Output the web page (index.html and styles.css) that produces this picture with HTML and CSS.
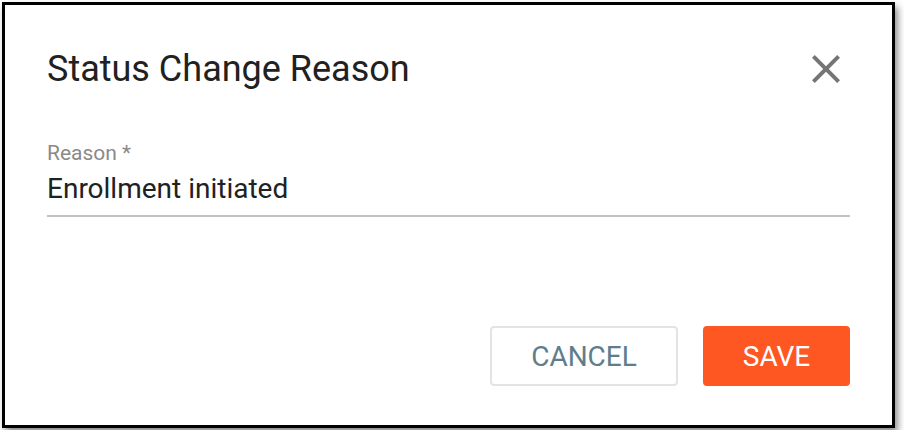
FILE: index.html
```html
<!DOCTYPE html>
<html>
<head>
<meta charset="utf-8">
<link rel="stylesheet" href="styles.css">
</head>
<body>
<div class="dialog">
  <div class="header">
    <h1 class="title">Status Change Reason</h1>
    <button class="close" aria-label="Close">
      <svg viewBox="0 0 24 24" width="48" height="48"><path fill="#757575" d="M19 6.41L17.59 5 12 10.59 6.41 5 5 6.41 10.59 12 5 17.59 6.41 19 12 13.41 17.59 19 19 17.59 13.41 12z"/></svg>
    </button>
  </div>
  <div class="field">
    <label class="label">Reason *</label>
    <div class="value">Enrollment initiated</div>
  </div>
  <div class="actions">
    <button class="btn btn-cancel">CANCEL</button>
    <button class="btn btn-save">SAVE</button>
  </div>
</div>
</body>
</html>
```
FILE: styles.css
```css
html, body {
  margin: 0;
  padding: 0;
  background: #ffffff;
}
body {
  font-family: Roboto, "Liberation Sans", sans-serif;
  padding: 2px;
}
.dialog {
  box-sizing: border-box;
  width: 893px;
  height: 426px;
  border: 3px solid #000;
  background: #fff;
  box-shadow: 3px 5px 7px rgba(0, 0, 0, 0.45);
  padding: 40px 42px 0 42px;
  display: flex;
  flex-direction: column;
}
.header {
  display: flex;
  align-items: center;
  justify-content: space-between;
  height: 48px;
}
.title {
  margin: 0;
  font-size: 36px;
  line-height: 42px;
  font-weight: 400;
  color: #212121;
}
.close {
  border: 0;
  background: none;
  padding: 0;
  width: 48px;
  height: 48px;
  display: flex;
}
.field {
  margin-top: 48px;
  display: flex;
  flex-direction: column;
  border-bottom: 2px solid #c2c2c2;
  padding-bottom: 10px;
}
.label {
  font-size: 21px;
  line-height: 24px;
  color: #8a8a8a;
}
.value {
  margin-top: 8px;
  font-size: 28px;
  line-height: 32px;
  color: #212121;
}
.actions {
  display: flex;
  justify-content: flex-end;
  gap: 25px;
  margin-top: 109px;
}
.btn {
  font-family: Roboto, "Liberation Sans", sans-serif;
  font-size: 28px;
  height: 60px;
  border-radius: 4px;
  cursor: pointer;
}
.btn-cancel {
  width: 188px;
  background: #fff;
  border: 2px solid #e3e3e3;
  color: #607d8b;
}
.btn-save {
  width: 147px;
  background: #ff5722;
  border: 0;
  color: #fff;
}
```
